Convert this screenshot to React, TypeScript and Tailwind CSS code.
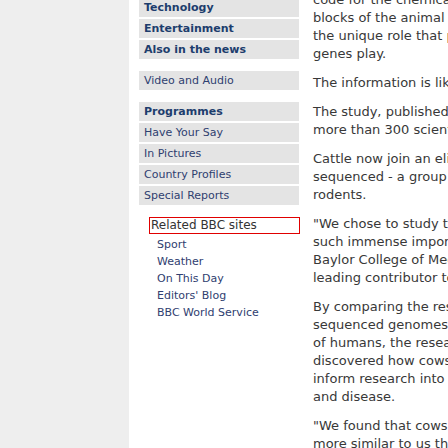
const navTop = [
  { label: "Technology", bold: true },
  { label: "Entertainment", bold: true },
  { label: "Also in the news", bold: true },
];

const navMid = [
  { label: "Programmes", bold: true },
  { label: "Have Your Say", bold: false },
  { label: "In Pictures", bold: false },
  { label: "Country Profiles", bold: false },
  { label: "Special Reports", bold: false },
];

const related = ["Sport", "Weather", "On This Day", "Editors' Blog", "BBC World Service"];

const story: string[][] = [
  [
    "code for the chemical building",
    "blocks of the animal and reveal",
    "the unique role that particular",
    "genes play.",
  ],
  ["The information is likely to help farmers."],
  [
    "The study, published in Science, involved",
    "more than 300 scientists in 25 countries.",
  ],
  [
    "Cattle now join an elite group of mammals",
    "sequenced - a group that includes humans,",
    "rodents.",
  ],
  [
    "\"We chose to study the cow because of its",
    "such immense importance,\" said Dr Richard",
    "Baylor College of Medicine in Houston, a",
    "leading contributor to the project.",
  ],
  [
    "By comparing the results with other",
    "sequenced genomes, including those",
    "of humans, the researchers have",
    "discovered how cows are similar, which",
    "inform research into human health",
    "and disease.",
  ],
  [
    "\"We found that cows are in some ways",
    "more similar to us than rodents are.\"",
  ],
];

function NavItem({ label, bold }: { label: string; bold: boolean }) {
  return (
    <div
      className={`flex h-[19px] w-[160px] items-center bg-[#e4e4e4] px-[5px] text-[11px] leading-none ${
        bold ? "font-bold text-[#1d3d6d]" : "text-[#2f4070]"
      }`}
    >
      {label}
    </div>
  );
}

export default function App() {
  return (
    <div
      className="flex h-[448px] w-[448px] overflow-hidden bg-white"
      style={{ fontFamily: '"DejaVu Sans", Verdana, sans-serif' }}
    >
      <div className="w-[129px] shrink-0 bg-[#eeeeee]" />

      <div className="ml-[10px] -mt-[2px] w-[160px] shrink-0">
        <div className="flex flex-col gap-[2px]">
          {navTop.map((n) => (
            <NavItem key={n.label} {...n} />
          ))}
        </div>
        <div className="mt-[12px]">
          <NavItem label="Video and Audio" bold={false} />
        </div>
        <div className="mt-[12px] flex flex-col gap-[2px]">
          {navMid.map((n) => (
            <NavItem key={n.label} {...n} />
          ))}
        </div>
        <div className="mt-[12px] ml-[10px] h-[17px] w-[151px] border border-[#e00000] pl-[1px] text-[12px] leading-[15px] text-[#333333]">
          Related BBC sites
        </div>
        <ul className="mt-[2px] ml-[18px] text-[11px] leading-[17px] text-[#2f4070]">
          {related.map((r) => (
            <li key={r} className="whitespace-nowrap">
              {r}
            </li>
          ))}
        </ul>
      </div>

      <div className="ml-[14px] -mt-[9px] w-[420px] shrink-0 text-[13px] leading-[18px] text-[#383838]">
        {story.map((p, i) => (
          <p key={i} className="mb-[11px] whitespace-nowrap">
            {p.map((line, j) => (
              <span key={j} className="block">
                {line}
              </span>
            ))}
          </p>
        ))}
      </div>
    </div>
  );
}
